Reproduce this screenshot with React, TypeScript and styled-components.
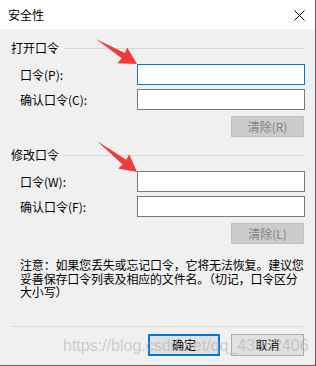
import React from "react";
import styled, { createGlobalStyle } from "styled-components";

const Global = createGlobalStyle`
  html, body { margin: 0; padding: 0; background: #ffffff; }
  body { font-family: "Noto Sans CJK SC", "Liberation Sans", sans-serif; }
  * { box-sizing: border-box; }
`;

const Window = styled.div`
  position: relative;
  width: 316px;
  height: 366px;
  border-right: 1px solid #5c5c5c;
  border-bottom: 1px solid #5c5c5c;
  background: #f0f0f0;
  display: flex;
  flex-direction: column;
  font-size: 12px;
  color: #000;
  overflow: hidden;
`;

const TitleBar = styled.div`
  height: 29px;
  flex-shrink: 0;
  background: #ffffff;
  display: flex;
  align-items: center;
  justify-content: space-between;
  padding: 1px 10px 0 8px;
`;

const Title = styled.span`
  font-size: 12px;
  line-height: 16px;
`;

const Body = styled.div`
  flex: 1;
  display: flex;
  flex-direction: column;
  padding: 11px 11px 9px 11px;
`;

const Group = styled.div<{ $first?: boolean }>`
  display: flex;
  flex-direction: column;
  margin-top: ${(p) => (p.$first ? "0" : "10px")};
`;

const GroupHeader = styled.div`
  height: 16px;
  display: flex;
  align-items: center;
  gap: 5px;
  line-height: 16px;
`;

const GroupLine = styled.div`
  flex: 1;
  height: 1px;
  background: #d7d7d7;
`;

const FieldRow = styled.div<{ $first?: boolean }>`
  height: 21px;
  display: flex;
  align-items: center;
  justify-content: space-between;
  padding-left: 9px;
  margin-top: ${(p) => (p.$first ? "8px" : "4px")};
`;

const FieldLabel = styled.span`
  line-height: 16px;
`;

const PasswordInput = styled.input<{ $focused?: boolean }>`
  width: 168px;
  height: 21px;
  margin: 0 -1px 0 0;
  padding: 0 3px;
  border: 1px solid ${(p) => (p.$focused ? "#0078d7" : "#7a7a7a")};
  background: #ffffff;
  outline: none;
  font-size: 12px;
`;

const ButtonRow = styled.div<{ $gap?: number; $top: number }>`
  display: flex;
  justify-content: flex-end;
  gap: ${(p) => p.$gap ?? 0}px;
  margin-top: ${(p) => p.$top}px;
`;

const ClearButton = styled.button`
  width: 73px;
  height: 21px;
  padding: 0;
  background: #cccccc;
  border: 1px solid #bfbfbf;
  color: #838383;
  font-family: "Noto Sans CJK SC", sans-serif;
  font-size: 12px;
  line-height: 16px;
`;

const DialogButton = styled.button<{ $default?: boolean; $w: number }>`
  width: ${(p) => p.$w}px;
  height: 22px;
  padding: 0;
  background: #e1e1e1;
  border: ${(p) => (p.$default ? "2px solid #0078d7" : "1px solid #adadad")};
  color: #000;
  font-family: "Noto Sans CJK SC", sans-serif;
  font-size: 12px;
  line-height: 16px;
`;

const Note = styled.div`
  margin-top: 14px;
  padding-left: 9px;
  line-height: 13.5px;
  white-space: nowrap;
  letter-spacing: -0.18px;
`;

const Footer = styled.div`
  margin-top: auto;
  display: flex;
  flex-direction: column;
`;

const Separator = styled.div`
  height: 1px;
  background: #dadada;
`;

const Watermark = styled.div`
  position: absolute;
  left: 63px;
  top: 336px;
  font-family: "Liberation Sans", Arial, sans-serif;
  font-size: 16px;
  line-height: 20px;
  color: rgba(170, 170, 170, 0.55);
  white-space: nowrap;
  pointer-events: none;
`;

const Overlay = styled.svg`
  position: absolute;
  left: 0;
  top: 0;
  pointer-events: none;
`;

const CloseIcon = () => (
  <svg width="11" height="11" viewBox="0 0 11 11">
    <path d="M0.5 0.5 L10.5 10.5 M10.5 0.5 L0.5 10.5" stroke="#000" strokeWidth="1" fill="none" />
  </svg>
);

export default function App() {
  return (
    <>
      <Global />
      <Window>
        <TitleBar>
          <Title>安全性</Title>
          <CloseIcon />
        </TitleBar>
        <Body>
          <Group $first>
            <GroupHeader>
              <span>打开口令</span>
              <GroupLine />
            </GroupHeader>
            <FieldRow $first>
              <FieldLabel>口令(P):</FieldLabel>
              <PasswordInput type="password" $focused readOnly />
            </FieldRow>
            <FieldRow>
              <FieldLabel>确认口令(C):</FieldLabel>
              <PasswordInput type="password" readOnly />
            </FieldRow>
            <ButtonRow $top={6}>
              <ClearButton disabled>清除(R)</ClearButton>
            </ButtonRow>
          </Group>
          <Group>
            <GroupHeader>
              <span>修改口令</span>
              <GroupLine />
            </GroupHeader>
            <FieldRow $first>
              <FieldLabel>口令(W):</FieldLabel>
              <PasswordInput type="password" readOnly />
            </FieldRow>
            <FieldRow>
              <FieldLabel>确认口令(F):</FieldLabel>
              <PasswordInput type="password" readOnly />
            </FieldRow>
            <ButtonRow $top={6}>
              <ClearButton disabled>清除(L)</ClearButton>
            </ButtonRow>
          </Group>
          <Note>
            注意：如果您丢失或忘记口令，它将无法恢复。建议您
            <br />
            妥善保存口令列表及相应的文件名。（切记，口令区分
            <br />
            大小写）
          </Note>
          <Footer>
            <Separator />
            <ButtonRow $top={7} $gap={11}>
              <DialogButton $default $w={72}>确定</DialogButton>
              <DialogButton $w={73}>取消</DialogButton>
            </ButtonRow>
          </Footer>
        </Body>
        <Watermark>https://blog.csdn.net/qq_43962406</Watermark>
        <Overlay width="316" height="366" viewBox="0 0 316 366">
          <polygon
            points="96,39 121.7,58.3 117.4,63.2 137,64 127.2,47.6 124.9,53.1"
            fill="#f23a3a"
          />
          <polygon
            points="97,141 122.6,164.6 118,168.6 137,172 129.2,154.3 126.2,159.8"
            fill="#f23a3a"
          />
        </Overlay>
      </Window>
    </>
  );
}
